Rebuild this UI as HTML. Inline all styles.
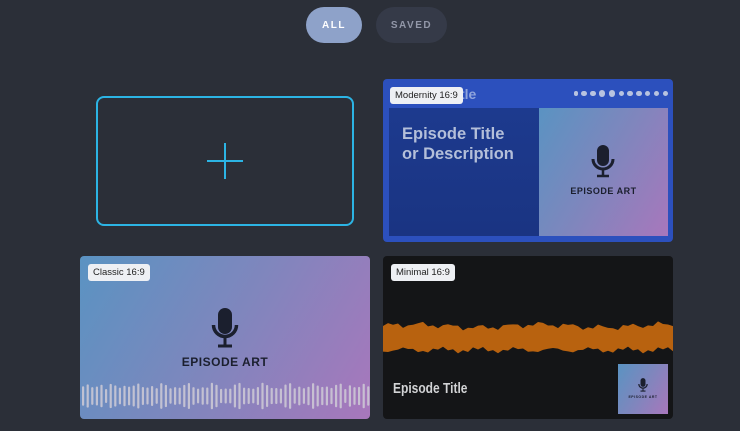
<!DOCTYPE html>
<html><head><meta charset="utf-8"><style>
*{margin:0;padding:0;box-sizing:border-box}
body{width:740px;height:431px;background:#2b2f38;font-family:"Liberation Sans",sans-serif;position:relative;overflow:hidden}
.pill{position:absolute;top:7px;height:36px;border-radius:18px;font-size:10px;font-weight:bold;letter-spacing:1.5px;display:flex;align-items:center;justify-content:center}
.card{position:absolute;border-radius:4px;overflow:hidden}
.tag{position:absolute;left:8px;top:8px;background:#eef0f4;color:#222;font-size:9.5px;padding:3px 5px;border-radius:3px;z-index:3}
.grad{background:linear-gradient(120deg,#5a93c2 0%,#7f86bd 50%,#a877bc 100%)}
.ea{font-weight:bold;color:#1b1f2e;letter-spacing:.5px;text-align:center}
</style></head><body>
<div class="pill" style="left:306px;width:56px;background:#8ea2c9;color:#fff">ALL</div>
<div class="pill" style="left:376px;width:71px;background:#353a48;color:#9297a8">SAVED</div>

<div style="position:absolute;left:96px;top:96px;width:258px;height:130px;border:2px solid #2cb4e4;border-radius:8px"></div>
<div style="position:absolute;left:207px;top:160px;width:36px;height:1.5px;background:#2cb4e4"></div>
<div style="position:absolute;left:224px;top:143px;width:1.5px;height:36px;background:#2cb4e4"></div>

<div class="card" style="left:383px;top:79px;width:290px;height:163px;background:#2c50bd">
 <div class="tag" style="left:7px;top:8px">Modernity 16:9</div>
 <div style="position:absolute;left:77px;top:7px;color:#8fa4dc;font-weight:bold;font-size:14px">tle</div>
 <div style="position:absolute;right:5px;top:11px;display:flex;gap:3.3px" id="dots"></div>
 <div style="position:absolute;left:6px;top:29px;width:150px;height:128px;background:linear-gradient(#1d3a8e,#1a3482)">
  <div style="position:absolute;left:13px;top:16px;color:#b4bfd9;font-weight:bold;font-size:16.5px;line-height:20px">Episode Title<br>or Description</div>
 </div>
 <div class="grad" style="position:absolute;left:156px;top:29px;width:129px;height:128px">
  <svg style="position:absolute;left:52px;top:37px" width="24" height="33" viewBox="0 0 24 33"><rect x="6" y="0" width="12" height="21" rx="6" fill="#1b1f2e"/><path d="M2 14a10 10 0 0 0 20 0" stroke="#1b1f2e" stroke-width="3" fill="none"/><path d="M12 24v6M6 31h12" stroke="#1b1f2e" stroke-width="2.5"/></svg>
  <div class="ea" style="position:absolute;left:0;right:0;top:78px;font-size:9px">EPISODE ART</div>
 </div>
</div>

<div class="card grad" style="left:80px;top:256px;width:290px;height:163px">
 <div class="tag">Classic 16:9</div>
 <svg style="position:absolute;left:131px;top:52px" width="28" height="40" viewBox="0 0 28 40"><rect x="7" y="0" width="14" height="26" rx="7" fill="#1b1f2e"/><path d="M2.5 17a11.5 11.5 0 0 0 23 0" stroke="#1b1f2e" stroke-width="3.5" fill="none"/><path d="M14 29v8M7 38h14" stroke="#1b1f2e" stroke-width="3"/></svg>
 <div class="ea" style="position:absolute;left:0;right:0;top:99px;font-size:12px">EPISODE ART</div>
 <svg id="bars" style="position:absolute;left:0;top:125px" width="290" height="30"></svg>
</div>

<div class="card" style="left:383px;top:256px;width:290px;height:163px;background:#141517">
 <div class="tag">Minimal 16:9</div>
 <svg id="wave" style="position:absolute;left:0;top:57px" width="290" height="50"></svg>
 <div style="position:absolute;left:10px;top:124px;color:#d2d3d5;font-weight:bold;font-size:15px;transform:scaleX(0.8);transform-origin:left">Episode Title</div>
 <div class="grad" style="position:absolute;left:235px;top:108px;width:50px;height:50px">
  <svg style="position:absolute;left:20px;top:14px" width="10" height="14" viewBox="0 0 24 33"><rect x="6" y="0" width="12" height="21" rx="6" fill="#1b1f2e"/><path d="M2 14a10 10 0 0 0 20 0" stroke="#1b1f2e" stroke-width="3" fill="none"/><path d="M12 24v6M6 31h12" stroke="#1b1f2e" stroke-width="2.5"/></svg>
  <div class="ea" style="position:absolute;left:0;right:0;top:31px;font-size:3.5px">EPISODE ART</div>
 </div>
</div>
<script>
var d=document.getElementById('dots');for(var i=0;i<11;i++){var s=document.createElement('div');var r=i>2&&i<5?6.5:(i==0?4.5:5.5);s.style.cssText='width:'+r+'px;height:'+r+'px;border-radius:50%;background:#b8c3e0;margin:'+(7-r)/2+'px 0 0 0';d.appendChild(s);}
var b='';for(var x=2;x<290;x+=4.6){var h=14+Math.abs(Math.sin(x*0.13)*8+Math.sin(x*0.37)*5);b+='<rect x="'+x+'" y="'+(15-h/2)+'" width="2.2" height="'+h+'" rx="1" fill="#cfcbd6" opacity="0.85"/>';}
document.getElementById('bars').innerHTML=b;
var t='',u='';for(var x=0;x<=290;x+=5){var a=12+Math.sin(x*0.21)*2+Math.sin(x*0.53)*1.5+Math.sin(x*0.05)*1.5;var c=12+Math.sin(x*0.17+1)*2+Math.sin(x*0.61)*1.5;t+=x+','+(25-a)+' ';u=x+','+(25+c)+' '+u;}
document.getElementById('wave').innerHTML='<polygon points="'+t+u+'" fill="#b8620f"/>';
</script>
</body></html>
